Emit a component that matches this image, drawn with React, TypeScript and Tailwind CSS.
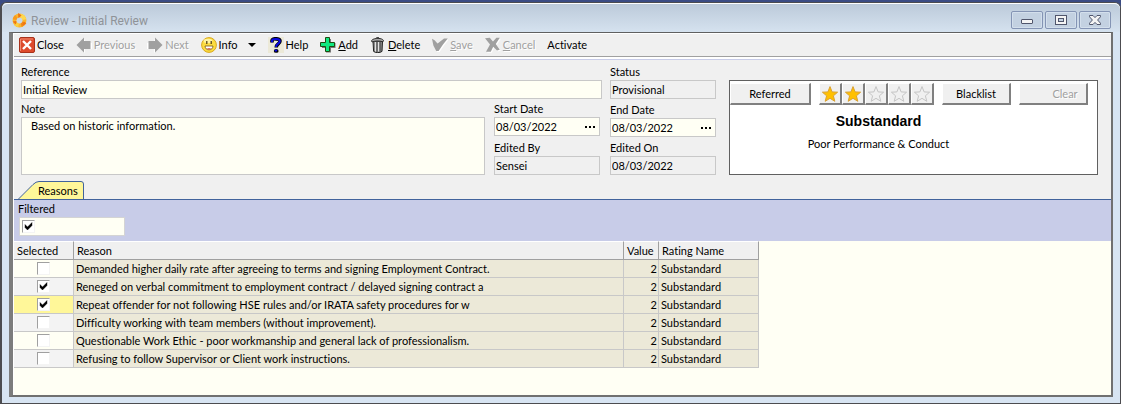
import { useState } from 'react'
import type { ReactNode } from 'react'

const REASONS = [
  { text: 'Demanded higher daily rate after agreeing to terms and signing Employment Contract.', selected: false },
  { text: 'Reneged on verbal commitment to employment contract / delayed signing contract a', selected: true },
  { text: 'Repeat offender for not following HSE rules and/or IRATA safety procedures for w', selected: true },
  { text: 'Difficulty working with team members (without improvement).', selected: false },
  { text: 'Questionable Work Ethic - poor workmanship and general lack of professionalism.', selected: false },
  { text: 'Refusing to follow Supervisor or Client work instructions.', selected: false },
]

const CURRENT_ROW = 2

const STAR = 'M8 0.6 L10.1 5.9 L15.6 6.2 L11.4 9.8 L12.8 15.3 L8 12.3 L3.2 15.3 L4.6 9.8 L0.4 6.2 L5.9 5.9 Z'

function RingLogo() {
  return (
    <svg viewBox="0 0 16 16" className="size-4">
      <circle cx="8.5" cy="7.5" r="5" fill="none" stroke="#fbb52c" strokeWidth="3.8" />
      <g fill="none" strokeWidth="3.8">
        <path d="M9.4 2.6 A5 5 0 0 1 13.4 6.6" stroke="#fdd850" />
        <path d="M13.2 9.2 A5 5 0 0 1 10.2 12.2" stroke="#f48a18" />
        <path d="M7.6 12.4 A5 5 0 0 1 4.6 10.6" stroke="#fdd040" />
        <path d="M3.6 6.6 A5 5 0 0 1 5.4 3.6" stroke="#f79a20" />
      </g>
      <path d="M7 0 L10.6 2.4 L7.4 5 Z M1.6 8.4 L5.4 8 L5 11.6 Z M13 8.4 L15.4 11 L11.4 12 Z" fill="#ee7414" />
    </svg>
  )
}

function CloseIcon() {
  return (
    <svg viewBox="0 0 16 16" className="size-4">
      <rect x="0.5" y="0.5" width="15" height="15" rx="1.5" fill="#dd4a2c" stroke="#a8321c" />
      <path d="M1.5 14 V2 H14" fill="none" stroke="#f08a70" />
      <path d="M4 4 L12 12 M12 4 L4 12" stroke="#fff" strokeWidth="2.4" />
    </svg>
  )
}

function ArrowIcon({ flip }: { flip?: boolean }) {
  return (
    <svg viewBox="0 0 16 16" className={flip ? 'size-4 -scale-x-100' : 'size-4'}>
      <path d="M1 8 L8 1 V5 H15 V11 H8 V15 Z" fill="#fff" transform="translate(1 1)" />
      <path d="M0.5 8 L8 0.5 V4 H14.5 V12 H8 V15.5 Z" fill="#a0a0a0" />
    </svg>
  )
}

function SmileIcon() {
  return (
    <svg viewBox="0 0 16 16" className="size-4">
      <circle cx="8" cy="8" r="7.4" fill="#fcdc40" stroke="#d8a820" />
      <ellipse cx="7" cy="4" rx="4.4" ry="2.2" fill="#fff3a0" />
      <path d="M5.8 4 V7 M10.2 4 V7" stroke="#4a3510" strokeWidth="1.2" />
      <path d="M4 9 H12 C11.8 11.6 10.2 12.8 8 12.8 C5.8 12.8 4.2 11.6 4 9 Z" fill="#fff" stroke="#7a5518" strokeWidth="0.8" />
      <path d="M5.6 11.8 C7 10.6 9 10.6 10.4 11.8 C9.4 12.8 6.6 12.8 5.6 11.8 Z" fill="#e07050" />
    </svg>
  )
}

function HelpIcon() {
  return (
    <svg viewBox="0 0 16 16" className="size-4">
      <rect width="16" height="16" fill="#ece9d8" />
      <path d="M4 5.6 V3.4 C4 1.2 12 1 12 4 C12 7 8.2 6.8 8.2 10.4" fill="none" stroke="#000" strokeWidth="3.6" />
      <path d="M4 5.2 V3.6 C4.4 1.6 11.8 1.4 11.8 4.2 C11.8 6.8 8 6.6 8 10" fill="none" stroke="#0a0ae0" strokeWidth="2" />
      <ellipse cx="8.2" cy="13.9" rx="2.4" ry="1.9" fill="#000" />
      <ellipse cx="7.9" cy="13.6" rx="1.4" ry="1.1" fill="#0a0ae0" />
    </svg>
  )
}

function AddIcon() {
  return (
    <svg viewBox="0 0 16 16" className="size-4">
      <path d="M6 2 H11 V6 H15.5 V11 H11 V15.5 H6 V11 H2 V6 H6 Z" fill="#777" />
      <path d="M5.5 0.5 H9.5 V5.5 H14.5 V9.5 H9.5 V14.5 H5.5 V9.5 H0.5 V5.5 H5.5 Z" fill="#10e880" stroke="#1e4a10" />
    </svg>
  )
}

function TrashIcon() {
  return (
    <svg viewBox="0 0 16 16" className="size-4">
      <path d="M3 4 H12.5 L12 14.4 C10 16 5.4 16 3.6 14.4 Z" fill="#8c8c8c" stroke="#222" />
      <path d="M5.5 5 V14.5 M8.5 5 V14.5" stroke="#e4e4e4" />
      <path d="M7 5 V15 M10.2 5 V14.5" stroke="#555" />
      <path d="M1.5 3.6 C3 1.6 6 1.4 8 1.4 C11 1.4 12.6 2.2 13.5 3.4 L13 4.8 C9 3.6 5 3.8 2 5 Z" fill="#a8a8a8" stroke="#222" strokeWidth="0.9" />
      <path d="M6 1.4 C6.6 0.2 9 0.2 9.4 1.4" fill="none" stroke="#222" />
    </svg>
  )
}

function TickIcon() {
  const d = 'M0 1.8 L2.6 3.2 L5.6 6.6 L12 1.4 H15.8 L11 7.6 L6.6 14 H4.2 L1.4 8.6 Z'
  return (
    <svg viewBox="0 0 16 16" className="size-4">
      <path d={d} fill="#fff" transform="translate(1 1)" />
      <path d={d} fill="#a0a0a0" />
    </svg>
  )
}

function CrossIcon() {
  const d = 'M0 1.2 L4.8 0.8 L8 4.4 L11.4 0.8 H14.8 L10.8 7 L14.8 12.8 L12 13.6 L8.2 9.8 L5.8 14.8 H1 L5 7.4 Z'
  return (
    <svg viewBox="0 0 16 16" className="size-4">
      <path d={d} fill="#fff" transform="translate(1 1)" />
      <path d={d} fill="#a0a0a0" />
    </svg>
  )
}

function ToolButton({ icon, disabled, children }: { icon?: ReactNode; disabled?: boolean; children: ReactNode }) {
  return (
    <button
      type="button"
      disabled={disabled}
      className="flex items-center gap-0.5 whitespace-nowrap disabled:text-[#a0a0a0] disabled:[text-shadow:1px_1px_0_#fff]"
    >
      {icon}
      <span>{children}</span>
    </button>
  )
}

function Field({ id, label, value, readOnly, picker }: { id: string; label: string; value: string; readOnly?: boolean; picker?: boolean }) {
  return (
    <div>
      <label htmlFor={id} className="block h-3.5 leading-3">
        {label}
      </label>
      <div className={`flex h-[19px] items-center border border-[#c8c8c8] ${readOnly ? 'bg-[#f0f0f0]' : 'bg-[#fffff4]'}`}>
        <input id={id} defaultValue={value} readOnly={readOnly} className="h-4 w-full min-w-0 bg-transparent pl-px outline-none" />
        {picker && (
          <button type="button" aria-label={`Choose ${label}`} className="flex gap-0.5 pr-1">
            <span className="size-0.5 bg-black" />
            <span className="size-0.5 bg-black" />
            <span className="size-0.5 bg-black" />
          </button>
        )}
      </div>
    </div>
  )
}

function Check({ checked, label, id }: { checked: boolean; label?: string; id?: string }) {
  const [on, setOn] = useState(checked)
  return (
    <span className="relative block size-[13px]">
      <input
        id={id}
        type="checkbox"
        aria-label={label}
        checked={on}
        onChange={() => setOn(!on)}
        className="block size-[13px] appearance-none border border-t-[#a0a0a0] border-r-[#f4f4f4] border-b-[#f4f4f4] border-l-[#a0a0a0] bg-white"
      />
      {on && (
        <svg viewBox="0 0 13 13" className="pointer-events-none absolute inset-0 size-[13px]">
          <path d="M3 4.5 L5.5 7 L10 2.5 V5.5 L5.5 10 L3 7.5 Z" fill="#000" stroke="#000" strokeWidth="0.4" />
        </svg>
      )}
    </span>
  )
}

const RAISED =
  'flex h-[22px] items-center justify-center border-t border-r-2 border-b-2 border-l border-t-white border-r-[#808080] border-b-[#808080] border-l-white bg-[#f0f0f0] disabled:text-[#a0a0a0] disabled:[text-shadow:1px_1px_0_#fff]'

function TitleButton({ label, children }: { label: string; children: ReactNode }) {
  return (
    <button
      type="button"
      aria-label={label}
      className="flex h-[18px] w-8 items-center justify-center rounded-xs border border-[#8494b4] bg-[#c3d1e1] shadow-[inset_0_0_0_1px_#d3dfec]"
    >
      <svg viewBox="0 0 12 10" className="h-2.5 w-3">
        {children}
      </svg>
    </button>
  )
}

export default function App() {
  return (
    <div className="flex min-h-screen flex-col bg-[#3b4c84] pt-0.5 font-[Lato,Arial,sans-serif] text-[11px] leading-3 text-black [font-variant-ligatures:none]">
      <div className="flex grow flex-col rounded-t-md border-t border-r border-b border-l-2 border-[#4c4c50] bg-[#d7e4f2]">
        <header className="flex h-[29px] items-center justify-between rounded-t-md border-t border-white bg-linear-to-b from-[#bccada] to-[#d5e2ef] pr-[9px] pl-[9px]">
          <h1 className="flex items-center gap-1 pt-1.5 font-[Roboto,sans-serif] text-xs text-[#8f9398]">
            <RingLogo />
            Review - Initial Review
          </h1>
          <div className="flex gap-0.5 pt-1">
            <TitleButton label="Minimize">
              <rect x="0.5" y="4.5" width="11" height="4" rx="0.5" fill="#f4f4f4" stroke="#50566c" />
            </TitleButton>
            <TitleButton label="Maximize">
              <rect x="0.5" y="0.5" width="11" height="9" fill="#f4f4f4" stroke="#50566c" />
              <rect x="3.5" y="3.5" width="5" height="3" fill="#c3d1e1" stroke="#50566c" />
            </TitleButton>
            <TitleButton label="Close window">
              <path d="M0.5 0.5 H4 L6 2.6 L8 0.5 H11.5 V1.8 L8.6 5 L11.5 8.2 V9.5 H8 L6 7.4 L4 9.5 H0.5 V8.2 L3.4 5 L0.5 1.8 Z" fill="#f4f4f4" stroke="#50566c" />
            </TitleButton>
          </div>
        </header>

        <main className="mr-[7px] mb-1.5 ml-[7px] flex grow flex-col border-t border-r-2 border-b-2 border-l-4 border-t-[#606060] border-r-[#707070] border-b-[#707070] border-l-[#7c7c7c] bg-[#fffff4]">
          <div className="flex grow flex-col border-l border-white">
            <nav className="flex h-6 items-center gap-3 border-t border-b border-t-white border-b-[#a0a0a0] bg-[#f0f0f0] pl-[5px]">
              <ToolButton icon={<CloseIcon />}>Close</ToolButton>
              <ToolButton icon={<ArrowIcon />} disabled>
                Previous
              </ToolButton>
              <ToolButton icon={<ArrowIcon flip />} disabled>
                Next
              </ToolButton>
              <div className="flex items-center gap-2.5">
                <ToolButton icon={<SmileIcon />}>Info</ToolButton>
                <button type="button" aria-label="More info">
                  <svg viewBox="0 0 8 4" className="h-1 w-2">
                    <path d="M0 0 H8 L4 4 Z" fill="#000" />
                  </svg>
                </button>
              </div>
              <ToolButton icon={<HelpIcon />}>Help</ToolButton>
              <ToolButton icon={<AddIcon />}>
                <u>A</u>dd
              </ToolButton>
              <ToolButton icon={<TrashIcon />}>
                <u>D</u>elete
              </ToolButton>
              <ToolButton icon={<TickIcon />} disabled>
                <u>S</u>ave
              </ToolButton>
              <ToolButton icon={<CrossIcon />} disabled>
                <u>C</u>ancel
              </ToolButton>
              <ToolButton>Activate</ToolButton>
            </nav>

            <div className="border-t-2 border-white bg-[#f0f0f0]">
              <form className="flex border-t border-[#c8cce8] pt-1.5 pr-[13px] pl-[7px]">
                <div className="flex grow flex-col gap-1">
                  <Field id="reference" label="Reference" value="Initial Review" />
                  <div className="flex grow gap-[9px] pr-0.5">
                    <div className="flex grow flex-col">
                      <label htmlFor="note" className="block h-3.5 leading-3">
                        Note
                      </label>
                      <textarea
                        id="note"
                        defaultValue="Based on historic information."
                        className="block w-full grow resize-none border border-[#c8c8c8] bg-[#fffff4] px-[9px] pt-0.5 outline-none"
                      />
                    </div>
                    <div className="flex w-[106px] flex-col gap-1.5">
                      <Field id="start" label="Start Date" value="08/03/2022" picker />
                      <Field id="editedBy" label="Edited By" value="Sensei" readOnly />
                    </div>
                  </div>
                </div>
                <div className="ml-2 flex w-[106px] shrink-0 flex-col gap-[5px]">
                  <Field id="status" label="Status" value="Provisional" readOnly />
                  <Field id="end" label="End Date" value="08/03/2022" picker />
                  <Field id="editedOn" label="Edited On" value="08/03/2022" readOnly />
                </div>
                <section className="mt-3.5 ml-[13px] w-[369px] shrink-0 border border-[#606060] bg-white">
                  <div className="flex gap-2 pt-0.5">
                    <button type="button" className={`${RAISED} w-[81px]`}>
                      Referred
                    </button>
                    <div className="flex">
                      {[1, 2, 3, 4, 5].map((n) => (
                        <button key={n} type="button" aria-label={`${n} stars`} className={`${RAISED} w-[23px]`}>
                          <svg viewBox="0 0 16 16" className="size-4">
                            <path d={STAR} fill={n <= 2 ? '#ffc000' : '#f0f0f0'} stroke={n <= 2 ? '#d9a030' : '#c4c4c4'} />
                          </svg>
                        </button>
                      ))}
                    </div>
                    <button type="button" className={`${RAISED} w-[69px]`}>
                      Blacklist
                    </button>
                    <button type="button" disabled className={`${RAISED} w-[69px] pl-6`}>
                      Clear
                    </button>
                  </div>
                  <div className="pt-1.5 pr-[70px] text-center">
                    <h2 className="font-['Liberation_Sans',Arial,sans-serif] text-sm leading-5 font-bold">Substandard</h2>
                    <p className="pt-[7px]">Poor Performance &amp; Conduct</p>
                  </div>
                </section>
              </form>

              <div role="tablist" className="flex border-b border-[#41639c] pt-1.5 pl-1">
                <button type="button" role="tab" aria-selected="true" className="relative h-[18px] w-[66px] pt-0.5 pl-5 text-left">
                  <svg viewBox="0 0 66 18" className="absolute inset-0 h-[18px] w-[66px]">
                    <path d="M0.5 18 L15 3.5 Q18 0.5 21 0.5 H63 Q65.5 0.5 65.5 3 V18" fill="#fff799" stroke="#41639c" />
                  </svg>
                  <span className="relative">Reasons</span>
                </button>
              </div>
            </div>

            <div className="bg-[#c8cce8] pt-[3px] pb-[5px] pl-1">
              <label htmlFor="filtered" className="block h-3.5 leading-3">
                Filtered
              </label>
              <div className="ml-px flex h-[19px] w-[106px] items-center border border-[#d4d4d4] bg-[#fffff4] pl-0.5">
                <Check id="filtered" checked />
              </div>
            </div>

            <table className="w-[745px] table-fixed border-separate border-spacing-0">
              <colgroup>
                <col className="w-[60px]" />
                <col />
                <col className="w-[35px]" />
                <col className="w-[100px]" />
              </colgroup>
              <thead>
                <tr className="h-[19px] text-left">
                  {['Selected', 'Reason', 'Value', 'Rating Name'].map((h) => (
                    <th
                      key={h}
                      scope="col"
                      className="border-t border-r border-b border-t-white border-r-[#a0a0a0] border-b-[#a0a0a0] bg-[#f0f0f0] p-0 pl-[3px] font-normal"
                    >
                      {h}
                    </th>
                  ))}
                </tr>
              </thead>
              <tbody className="[&_td]:border-r [&_td]:border-b [&_td]:border-[#c8c8c8] [&_td]:p-0">
                {REASONS.map((r, i) => (
                  <tr key={r.text} className="h-[18px] bg-[#ece9d8]">
                    <td className={i === CURRENT_ROW ? 'bg-[#fff799]' : i % 2 ? 'bg-[#f3f3f3]' : 'bg-[#fffff4]'}>
                      <div className="flex justify-center">
                        <Check checked={r.selected} label={`Select: ${r.text}`} />
                      </div>
                    </td>
                    <td>
                      <div className="truncate pl-0.5">{r.text}</div>
                    </td>
                    <td>
                      <div className="pr-px text-right">2</div>
                    </td>
                    <td>
                      <div className="pl-0.5">Substandard</div>
                    </td>
                  </tr>
                ))}
              </tbody>
            </table>
            <div className="min-h-6 grow" />
          </div>
        </main>
      </div>
    </div>
  )
}
